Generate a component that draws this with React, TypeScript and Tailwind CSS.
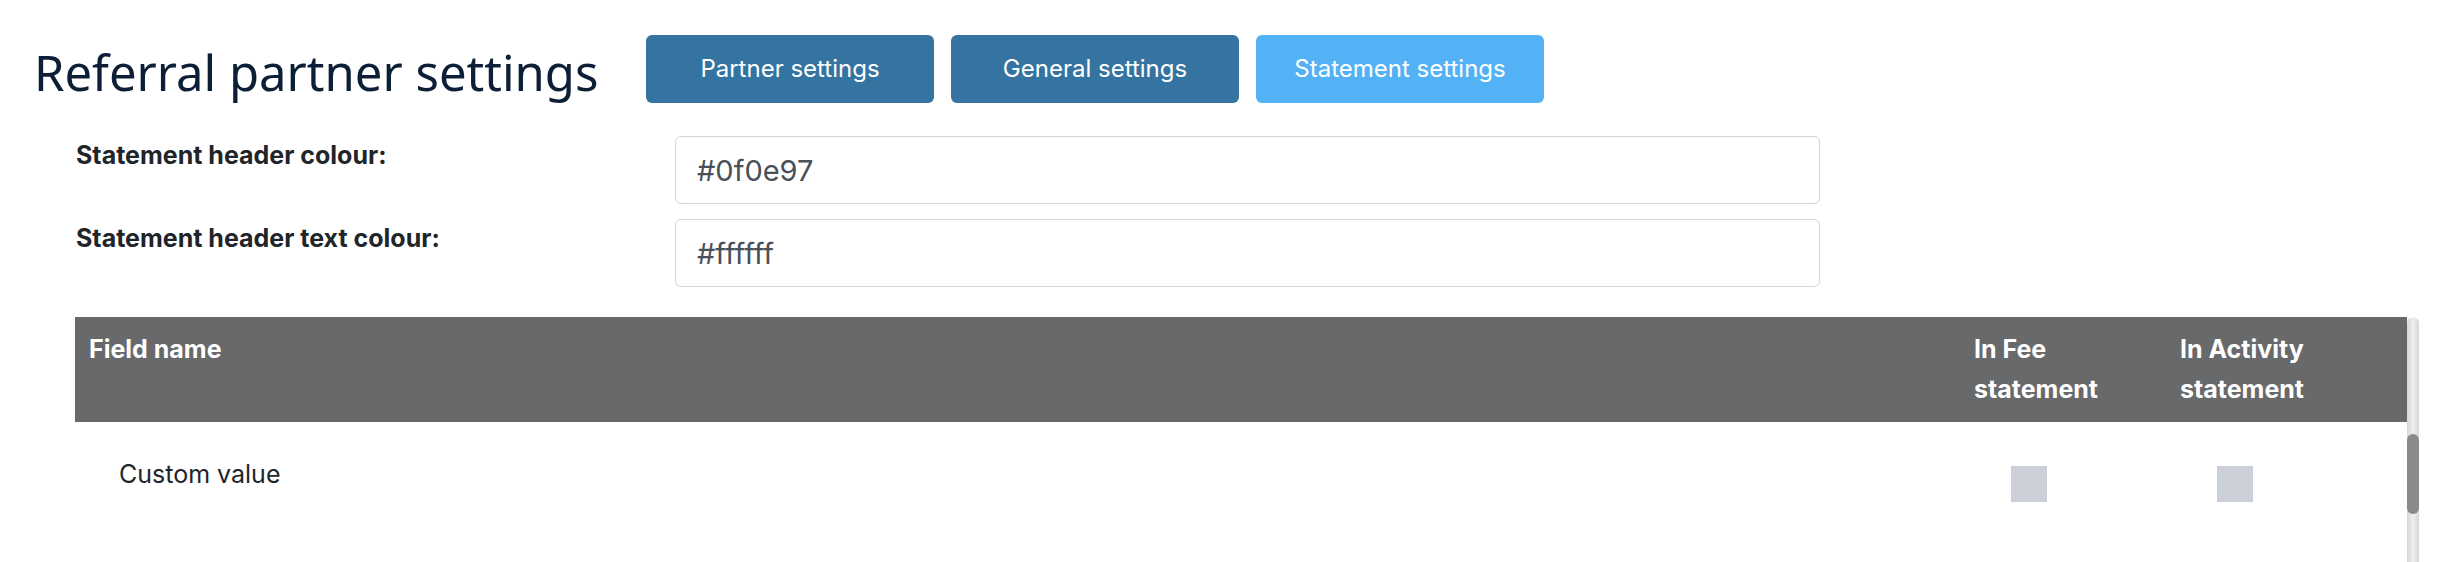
import React from "react";

const tabs = [
  { label: "Partner settings", active: false },
  { label: "General settings", active: false },
  { label: "Statement settings", active: true },
];

const colourFields = [
  { label: "Statement header colour:", value: "#0f0e97" },
  { label: "Statement header text colour:", value: "#ffffff" },
];

const rows = [{ name: "Custom value", inFee: false, inActivity: false }];

function Checkbox({ checked }: { checked: boolean }) {
  return (
    <div
      className={
        checked ? "w-[36px] h-[36px] bg-[#3573a0]" : "w-[36px] h-[36px] bg-[#cbd0d8]"
      }
    />
  );
}

export default function App() {
  return (
    <div className="w-full h-[562px] overflow-hidden bg-white font-['Inter','Liberation_Sans',sans-serif] text-[#212529]">
      {/* header */}
      <div className="flex items-start pt-[35px] pl-[34px]">
        <h1 className="w-[612px] mt-[13px] text-[49px] leading-[49px] font-normal text-[#0d1f36] font-['Noto_Sans','Open_Sans',sans-serif]">
          Referral partner settings
        </h1>
        <div className="flex gap-[17px]">
          {tabs.map((t) => (
            <button
              key={t.label}
              className={
                t.active
                  ? "w-[288px] h-[68px] rounded-[6px] bg-[#52b2f5] text-white text-[24px]"
                  : "w-[288px] h-[68px] rounded-[6px] bg-[#3573a0] text-white text-[24px]"
              }
            >
              {t.label}
            </button>
          ))}
        </div>
      </div>

      {/* colour fields */}
      <div className="flex flex-col gap-[15px] mt-[33px] pl-[76px]">
        {colourFields.map((f) => (
          <div key={f.label} className="flex items-start">
            <label className="w-[599px] pt-[1px] text-[25px] leading-[36px] font-bold">
              {f.label}
            </label>
            <input
              readOnly
              value={f.value}
              className="w-[1145px] h-[68px] px-[21px] border border-[#ced4da] rounded-[6px] text-[29px] text-[#495057] outline-none"
            />
          </div>
        ))}
      </div>

      {/* statement fields table */}
      <div className="flex ml-[75px] mt-[30px]">
        <div className="w-[2332px]">
          <div className="grid grid-cols-[1885px_206px_241px] h-[105px] pt-[12px] bg-[#68696b] text-white font-bold text-[25px] leading-[40px]">
            <div className="pl-[14px]">Field name</div>
            <div className="pl-[14px]">
              In Fee
              <br />
              statement
            </div>
            <div className="pl-[14px]">
              In Activity
              <br />
              statement
            </div>
          </div>
          {rows.map((r) => (
            <div key={r.name} className="grid grid-cols-[1885px_206px_241px] pt-[38px] pb-[30px]">
              <div className="pl-[44px] text-[25px] leading-[36px] -mt-[4px]">{r.name}</div>
              <div className="pl-[51px] pt-[6px]">
                <Checkbox checked={r.inFee} />
              </div>
              <div className="pl-[51px] pt-[6px]">
                <Checkbox checked={r.inActivity} />
              </div>
            </div>
          ))}
        </div>
        {/* scrollbar */}
        <div className="w-[12px] h-[260px] pt-[117px] rounded-t-full bg-gradient-to-r from-[#d6d6d6] via-[#f0f0f0] to-[#d6d6d6]">
          <div className="h-[80px] rounded-full bg-[#8a8a8a]" />
        </div>
      </div>
    </div>
  );
}
